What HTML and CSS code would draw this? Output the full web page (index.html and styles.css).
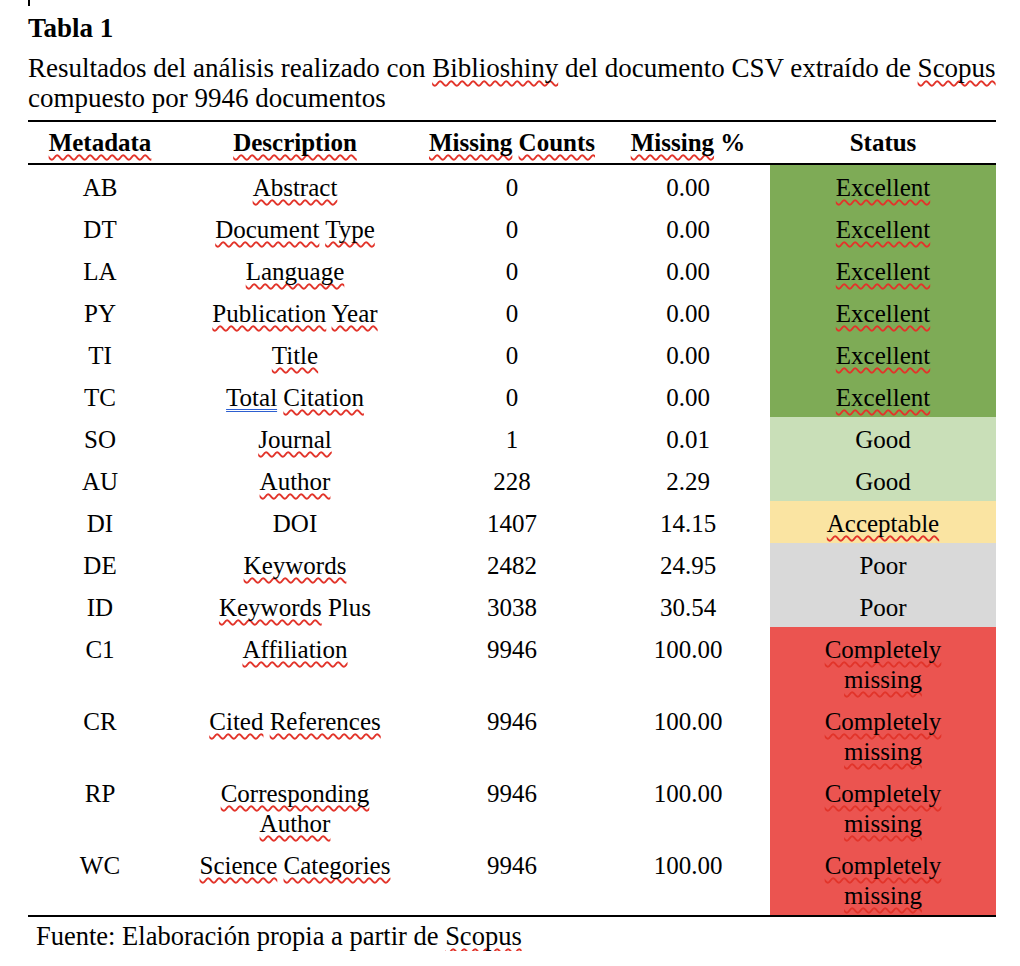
FILE: index.html
```html
<!DOCTYPE html>
<html lang="es">
<head>
<meta charset="utf-8">
<title>Tabla 1</title>
<link rel="stylesheet" href="styles.css">
</head>
<body>
<div class="page">
  <span class="cursor"></span>
  <div class="title">Tabla 1</div>
  <div class="caption">Resultados del análisis realizado con <span class="sp">Biblioshiny</span> del documento CSV extraído de <span class="sp">Scopus</span><br>compuesto por 9946 documentos</div>
  <table class="data">
    <colgroup>
      <col class="c1"><col class="c2"><col class="c3"><col class="c4"><col class="c5">
    </colgroup>
    <thead>
      <tr>
        <th><span class="sp">Metadata</span></th>
        <th><span class="sp">Description</span></th>
        <th><span class="sp">Missing</span> <span class="sp">Counts</span></th>
        <th><span class="sp">Missing</span> %</th>
        <th>Status</th>
      </tr>
    </thead>
    <tbody>
      <tr><td>AB</td><td><span class="sp">Abstract</span></td><td>0</td><td>0.00</td><td class="st ex"><span class="sp">Excellent</span></td></tr>
      <tr><td>DT</td><td><span class="sp">Document</span> <span class="sp">Type</span></td><td>0</td><td>0.00</td><td class="st ex"><span class="sp">Excellent</span></td></tr>
      <tr><td>LA</td><td><span class="sp">Language</span></td><td>0</td><td>0.00</td><td class="st ex"><span class="sp">Excellent</span></td></tr>
      <tr><td>PY</td><td><span class="sp">Publication</span> <span class="sp">Year</span></td><td>0</td><td>0.00</td><td class="st ex"><span class="sp">Excellent</span></td></tr>
      <tr><td>TI</td><td><span class="sp">Title</span></td><td>0</td><td>0.00</td><td class="st ex"><span class="sp">Excellent</span></td></tr>
      <tr><td>TC</td><td><span class="gr">Total</span> <span class="sp">Citation</span></td><td>0</td><td>0.00</td><td class="st ex"><span class="sp">Excellent</span></td></tr>
      <tr><td>SO</td><td><span class="sp">Journal</span></td><td>1</td><td>0.01</td><td class="st gd">Good</td></tr>
      <tr><td>AU</td><td><span class="sp">Author</span></td><td>228</td><td>2.29</td><td class="st gd">Good</td></tr>
      <tr><td>DI</td><td>DOI</td><td>1407</td><td>14.15</td><td class="st ac"><span class="sp">Acceptable</span></td></tr>
      <tr><td>DE</td><td><span class="sp">Keywords</span></td><td>2482</td><td>24.95</td><td class="st pr">Poor</td></tr>
      <tr><td>ID</td><td><span class="sp">Keywords</span> Plus</td><td>3038</td><td>30.54</td><td class="st pr">Poor</td></tr>
      <tr><td>C1</td><td><span class="sp">Affiliation</span></td><td>9946</td><td>100.00</td><td class="st cm"><span class="sp">Completely</span><br><span class="sp">missing</span></td></tr>
      <tr><td>CR</td><td><span class="sp">Cited</span> <span class="sp">References</span></td><td>9946</td><td>100.00</td><td class="st cm"><span class="sp">Completely</span><br><span class="sp">missing</span></td></tr>
      <tr><td>RP</td><td><span class="sp">Corresponding</span><br><span class="sp">Author</span></td><td>9946</td><td>100.00</td><td class="st cm"><span class="sp">Completely</span><br><span class="sp">missing</span></td></tr>
      <tr><td>WC</td><td><span class="sp">Science</span> <span class="sp">Categories</span></td><td>9946</td><td>100.00</td><td class="st cm"><span class="sp">Completely</span><br><span class="sp">missing</span></td></tr>
    </tbody>
  </table>
  <div class="source">Fuente: Elaboración propia a partir de <span class="sp">Scopus</span></div>
</div>
</body>
</html>
```

FILE: styles.css
```css
html, body {
  margin: 0;
  padding: 0;
  background: #ffffff;
}

body {
  font-family: "Liberation Serif", "Times New Roman", serif;
  color: #000000;
  font-size: 27px;
}

.page {
  position: relative;
  width: 968px;
  padding: 13px 0 0 28px;
}

.cursor {
  position: absolute;
  left: 28px;
  top: 0;
  width: 2px;
  height: 6px;
  background: #000;
}

.title {
  font-weight: bold;
  line-height: 30px;
}

.caption {
  margin-top: 10px;
  line-height: 30px;
  white-space: nowrap;
}

.sp {
  text-decoration: underline wavy #e2342a;
  text-decoration-thickness: 1.5px;
  text-underline-offset: 3px;
  text-decoration-skip-ink: none;
}

.gr {
  text-decoration: underline double #2d5fd0;
  text-decoration-thickness: 1px;
  text-underline-offset: 3px;
  text-decoration-skip-ink: none;
}

.data {
  margin-top: 7px;
  width: 968px;
  font-size: 25px;
  border-collapse: collapse;
  table-layout: fixed;
  border-top: 2px solid #000;
  border-bottom: 2px solid #000;
}

.c1 { width: 144px; }
.c2 { width: 246px; }
.c3 { width: 188px; }
.c4 { width: 164px; }
.c5 { width: 226px; }

.data th {
  font-weight: bold;
  text-align: center;
  line-height: 30px;
  padding: 6px 0 5px;
  border-bottom: 2px solid #000;
}

.data td {
  text-align: center;
  vertical-align: top;
  line-height: 30px;
  padding: 8px 0 4px;
}

.st.ex { background: #7eab56; }
.st.gd { background: #c9dfb8; }
.st.ac { background: #fae4a2; }
.st.pr { background: #d9d9d9; }
.st.cm { background: #eb5450; }

.source {
  padding-left: 8px;
  font-size: 26.5px;
  line-height: 30px;
  margin-top: 4px;
}
```
